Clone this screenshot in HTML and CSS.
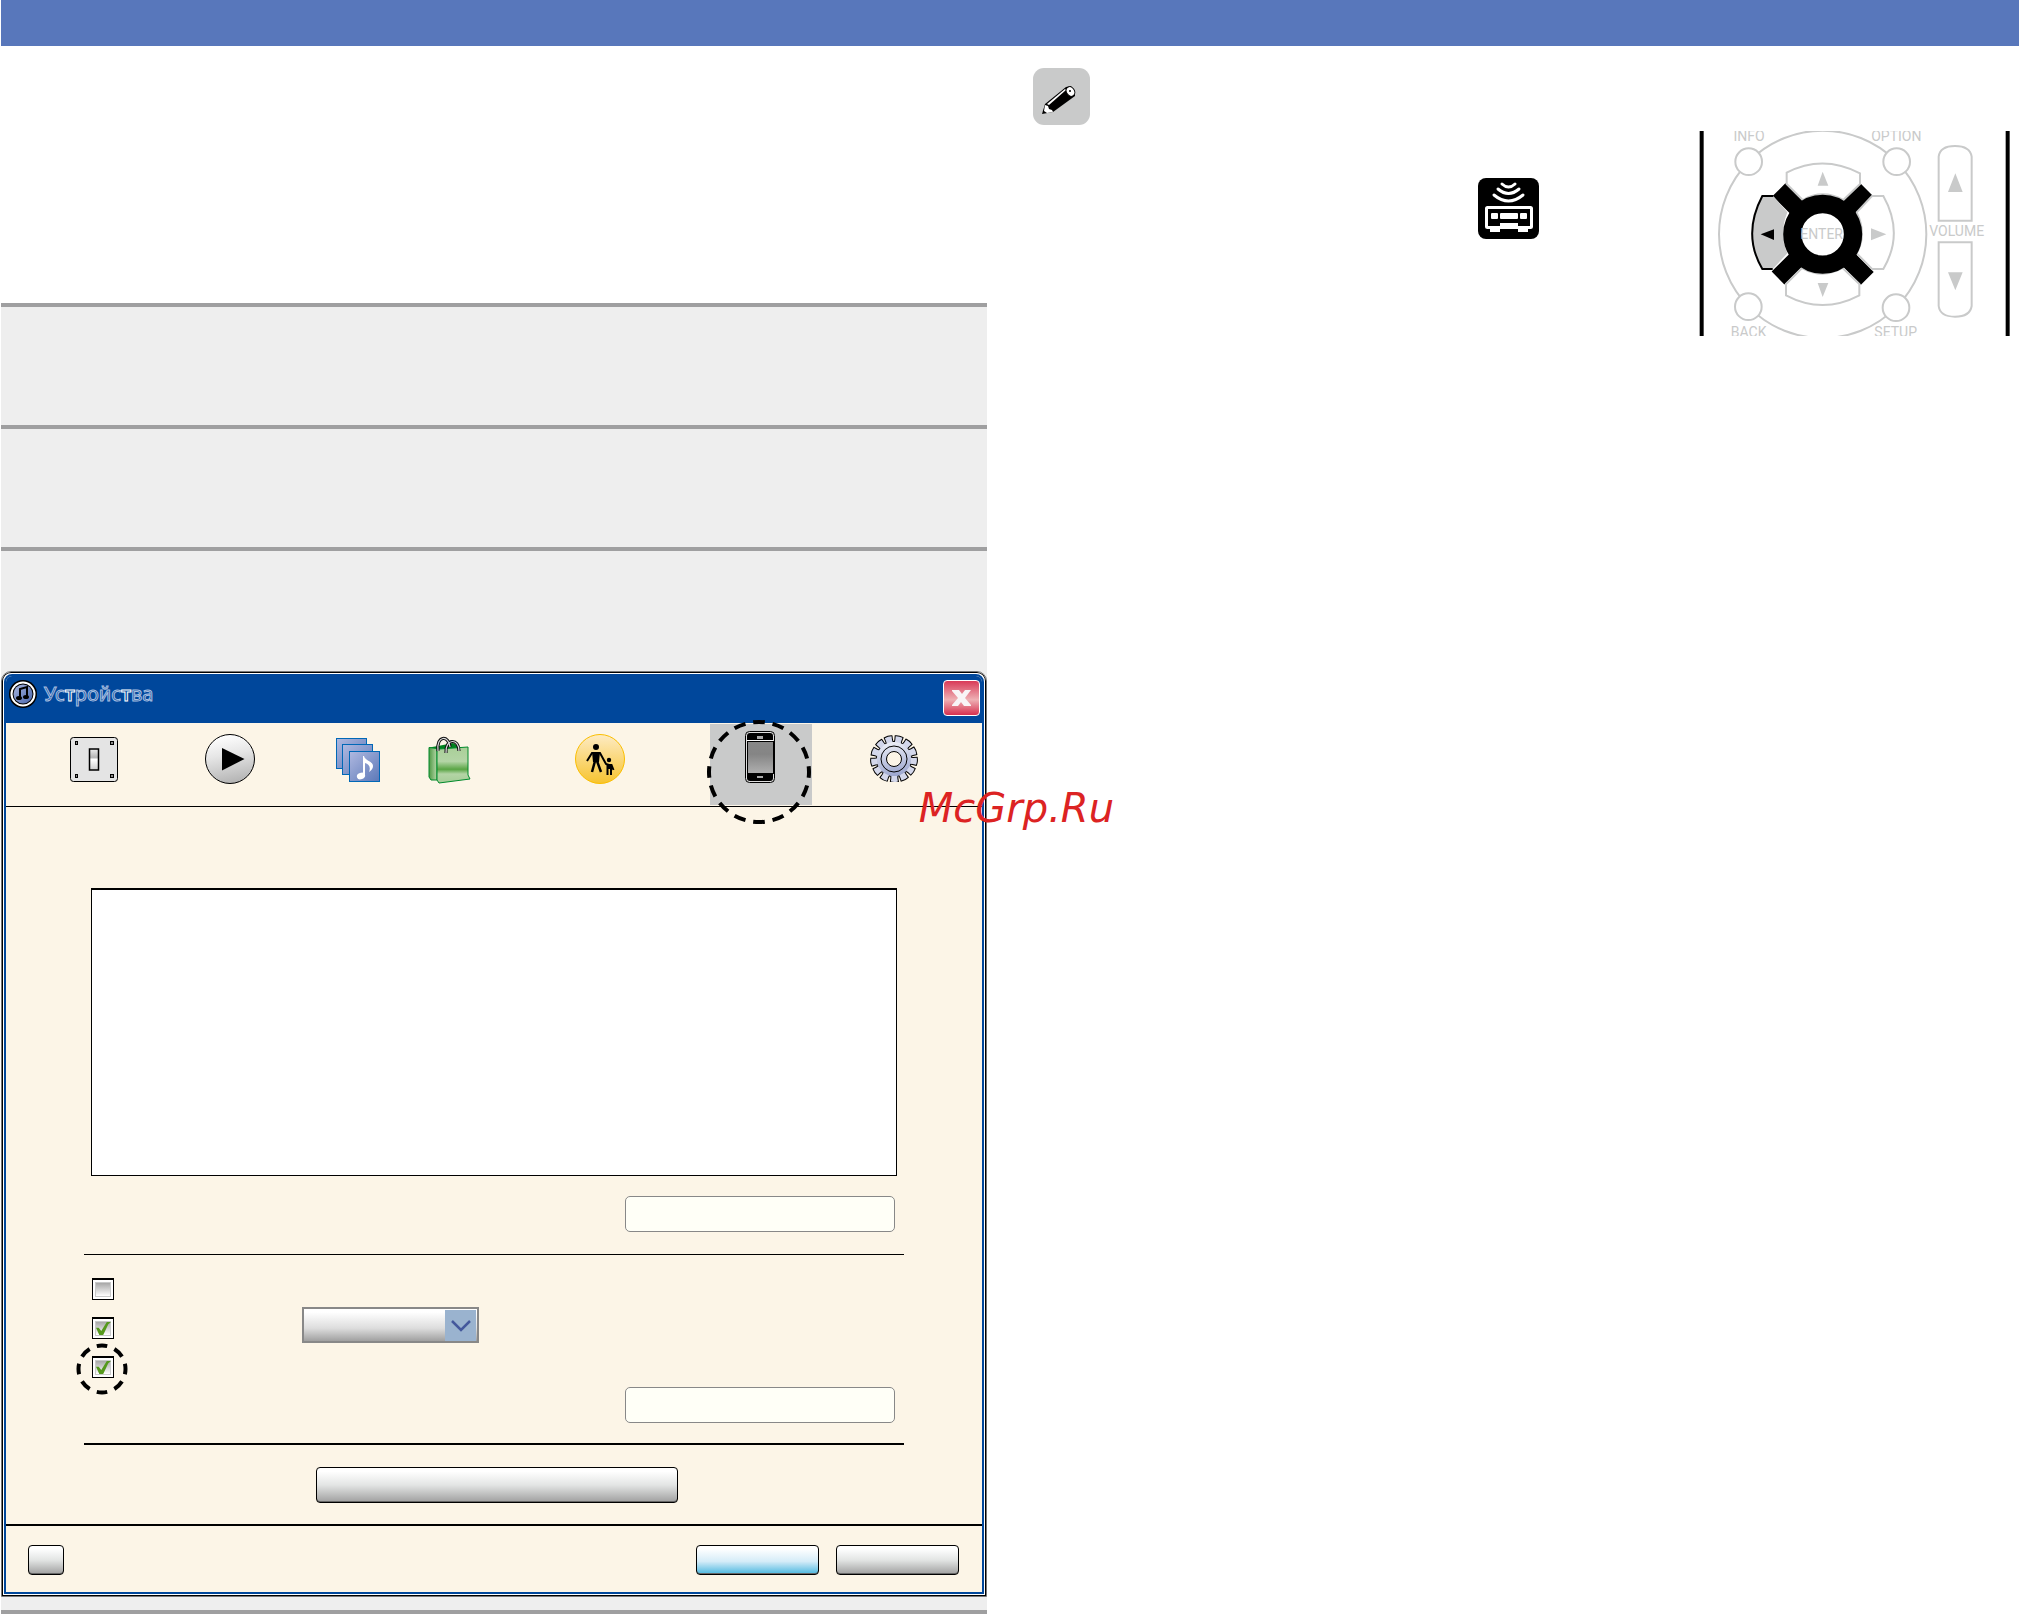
FILE: index.html
```html
<!DOCTYPE html>
<html lang="ru">
<head>
    <meta charset="UTF-8">
    <meta name="viewport" content="width=device-width, initial-scale=1.0">
    <title>Устройства</title>
    <link rel="stylesheet" href="styles.css">
</head>
<body>
    <header class="top-bar"></header>

    <main class="page">
        <section class="steps">
            <div class="step"></div>
            <div class="step"></div>
            <div class="step"></div>

            <div class="dialog">
                <div class="dialog-inner">
                    <div class="title-bar">
                        <svg class="app-icon" width="28" height="28" viewBox="0 0 28 28">
                            <defs>
                                <linearGradient id="noteBg" x1="0" y1="0" x2="1" y2="1">
                                    <stop offset="0" stop-color="#a9b6de"/>
                                    <stop offset="1" stop-color="#4765ac"/>
                                </linearGradient>
                            </defs>
                            <circle cx="14" cy="14" r="14" fill="#000"/>
                            <circle cx="14" cy="14" r="11.500" fill="#000" stroke="#fff" stroke-width="2"/>
                            <circle cx="14" cy="14" r="9.500" fill="url(#noteBg)"/>
                            <path d="M11 18V9l7-2v9" fill="none" stroke="#000" stroke-width="2"/>
                            <ellipse cx="10" cy="18" rx="3" ry="2" fill="#000"/>
                            <ellipse cx="17" cy="17" rx="3" ry="2" fill="#000"/>
                        </svg>
                        <h1 class="title">Ус<b>т</b>ройс<b>т</b>ва</h1>
                        <button class="close-button" aria-label="Закрыть">
                            <svg width="21" height="18" viewBox="0 0 21 18">
                                <path d="M1 1h7l3 4 3-4h6l-6 8 6 7v1h-7l-3-4-3 4H1v-1l6-7-6-7z" fill="#f8f4f6"/>
                            </svg>
                        </button>
                    </div>

                    <nav class="toolbar">
                        <button class="tab" aria-label="Основные">
                            <svg width="48" height="50" viewBox="0 0 48 50">
                                <defs>
                                    <linearGradient id="switchBg" x1="0" y1="0" x2="0" y2="1">
                                        <stop offset="0" stop-color="#eee"/>
                                        <stop offset=".4" stop-color="#b5b5b5"/>
                                        <stop offset=".5" stop-color="#fff"/>
                                        <stop offset="1" stop-color="#ccc"/>
                                    </linearGradient>
                                </defs>
                                <rect x=".5" y="3.500" width="47" height="44" rx="3" fill="#e4e4e4" stroke="#000"/>
                                <g fill="#888" stroke="#000">
                                    <rect x="5.500" y="7.500" width="2" height="3"/>
                                    <rect x="40.500" y="7.500" width="3" height="3"/>
                                    <rect x="5.500" y="40.500" width="2" height="3"/>
                                    <rect x="40.500" y="40.500" width="3" height="3"/>
                                </g>
                                <rect x="19.500" y="15" width="9" height="21" fill="url(#switchBg)" stroke="#000" stroke-width="1.500"/>
                            </svg>
                        </button>
                        <button class="tab" aria-label="Воспроизведение">
                            <svg width="50" height="50" viewBox="0 0 50 50">
                                <defs>
                                    <linearGradient id="playBg" x1=".4" y1="0" x2=".6" y2="1">
                                        <stop offset="0" stop-color="#fff"/>
                                        <stop offset=".4" stop-color="#e6e6e6"/>
                                        <stop offset="1" stop-color="#b2b2b2"/>
                                    </linearGradient>
                                </defs>
                                <circle cx="25" cy="25" r="24.500" fill="url(#playBg)" stroke="#000"/>
                                <path d="M17 14v22.500L39.500 25z" fill="#000"/>
                            </svg>
                        </button>
                        <button class="tab" aria-label="Общий доступ">
                            <svg width="44" height="50" viewBox="0 0 44 50">
                                <defs>
                                    <linearGradient id="albumBg" x1="0" y1="0" x2="1" y2="1">
                                        <stop offset="0" stop-color="#b0b9e0"/>
                                        <stop offset="1" stop-color="#5c78b8"/>
                                    </linearGradient>
                                </defs>
                                <g fill="url(#albumBg)" stroke="#0068b7">
                                    <rect x=".5" y="4.500" width="30" height="30"/>
                                    <rect x="6.500" y="10.500" width="30" height="30"/>
                                    <rect x="13.500" y="17.500" width="30" height="30"/>
                                </g>
                                <ellipse cx="25" cy="42" rx="4.200" ry="3.200" fill="#fff" transform="rotate(-20 25 42)"/>
                                <path d="M27 42V22h1c1 5 9 5 9 10 0 2-1 4-4 6 2-5 0-8-4-9v13z" fill="#fff"/>
                            </svg>
                        </button>
                        <button class="tab tab-store" aria-label="Магазин">
                            <svg width="43" height="50" viewBox="0 0 43 50">
                                <defs>
                                    <linearGradient id="bagFront" x1="0" y1="0" x2="0" y2="1">
                                        <stop offset="0" stop-color="#a9cf98"/>
                                        <stop offset=".4" stop-color="#b4d5a6"/>
                                        <stop offset=".62" stop-color="#5aa545"/>
                                        <stop offset=".75" stop-color="#b3d4a5"/>
                                        <stop offset="1" stop-color="#a5cc96"/>
                                    </linearGradient>
                                    <linearGradient id="bagSide" x1="0" y1="0" x2="1" y2="0">
                                        <stop offset="0" stop-color="#4f9a45"/>
                                        <stop offset="1" stop-color="#b7d7a8"/>
                                    </linearGradient>
                                </defs>
                                <path d="M1 13.500L10 12l15-3 5 3v5H9z" fill="#00821e"/>
                                <path d="M1 13.500l8 1V46H3l-2-3z" fill="url(#bagSide)" stroke="#008a2b"/>
                                <path d="M9 17l2-2 29-2v28l2 4-31 4-2-3z" fill="url(#bagFront)" stroke="#008a2b"/>
                                <g fill="none">
                                    <path d="M10 17C8 1 21 1 22 13M18 19C17 4 31 4 31 17" stroke="#111" stroke-width="3.200"/>
                                    <path d="M10 17C8 1 21 1 22 13M18 19C17 4 31 4 31 17" stroke="#ddd" stroke-width="1.200"/>
                                </g>
                            </svg>
                        </button>
                        <button class="tab" aria-label="Родительский контроль">
                            <svg width="50" height="50" viewBox="0 0 50 50">
                                <defs>
                                    <linearGradient id="parentBg" x1="0" y1="0" x2="0" y2="1">
                                        <stop offset="0" stop-color="#fdebc4"/>
                                        <stop offset="1" stop-color="#f7c430"/>
                                    </linearGradient>
                                </defs>
                                <circle cx="25" cy="25" r="24.500" fill="url(#parentBg)" stroke="#fabe00"/>
                                <circle cx="21" cy="13" r="3" fill="#000"/>
                                <circle cx="34" cy="26" r="2.200" fill="#000"/>
                                <g fill="none" stroke="#000" stroke-width="2">
                                    <path d="M12 27l5-8h8l6 11 3 1"/>
                                    <path d="M20 27l-3 11M22 27l4 11" stroke-width="2.500"/>
                                    <path d="M32.500 41V31h4l2 5M36 32v9"/>
                                </g>
                                <path d="M17 18h8l-1 10h-6zM32 30h5v5h-5z" fill="#000"/>
                            </svg>
                        </button>
                        <button class="tab tab-active" aria-label="Устройства">
                            <svg width="32" height="52" viewBox="0 0 32 52">
                                <defs>
                                    <linearGradient id="phoneScreen" x1="0" y1="0" x2="0" y2="1">
                                        <stop offset="0" stop-color="#888"/>
                                        <stop offset=".4" stop-color="#858585"/>
                                        <stop offset="1" stop-color="#b0b0b0"/>
                                    </linearGradient>
                                </defs>
                                <rect x=".5" y=".5" width="29" height="51" rx="4" fill="#ddd" stroke="#000"/>
                                <rect x="2" y="2" width="26" height="48" rx="3" fill="#000"/>
                                <rect x="2" y="9" width="26" height="33" fill="#fff"/>
                                <rect x="2.500" y="10.500" width="26" height="32" fill="url(#phoneScreen)" stroke="#000"/>
                                <path d="M12 5h6v3h-6zM12 45h6v2h-6z" fill="#aaa"/>
                            </svg>
                            <svg class="highlight-tab" width="106" height="106" viewBox="0 0 106 106">
                                <circle cx="53" cy="53" r="50" pathLength="240" fill="none" stroke="#000" stroke-width="4" stroke-dasharray="9 6" stroke-dashoffset="4.500"/>
                            </svg>
                        </button>
                        <button class="tab" aria-label="Дополнительные">
                            <svg width="48" height="48" viewBox="0 0 48 48">
                                <defs>
                                    <linearGradient id="gearBg" gradientUnits="userSpaceOnUse" x1="20" y1="0" x2="28" y2="48">
                                        <stop offset="0" stop-color="#fff"/>
                                        <stop offset="1" stop-color="#8d99c8"/>
                                    </linearGradient>
                                    <path id="tooth" d="M21 8.500V6L20.500 2.500Q24 1.500 27.500 2.500L27 6v2.500z"/>
                                    <g id="teeth">
                                        <use href="#tooth" transform="rotate(13 24 25)"/>
                                        <use href="#tooth" transform="rotate(41 24 25)"/>
                                        <use href="#tooth" transform="rotate(69 24 25)"/>
                                        <use href="#tooth" transform="rotate(96 24 25)"/>
                                        <use href="#tooth" transform="rotate(124 24 25)"/>
                                        <use href="#tooth" transform="rotate(152 24 25)"/>
                                        <use href="#tooth" transform="rotate(179 24 25)"/>
                                        <use href="#tooth" transform="rotate(207 24 25)"/>
                                        <use href="#tooth" transform="rotate(235 24 25)"/>
                                        <use href="#tooth" transform="rotate(262 24 25)"/>
                                        <use href="#tooth" transform="rotate(290 24 25)"/>
                                        <use href="#tooth" transform="rotate(318 24 25)"/>
                                        <use href="#tooth" transform="rotate(345 24 25)"/>
                                    </g>
                                </defs>
                                <use href="#teeth" fill="#000" stroke="#000" stroke-width="2"/>
                                <circle cx="24" cy="25" r="17.500" fill="url(#gearBg)" stroke="#000"/>
                                <use href="#teeth" fill="#d3d7eb"/>
                                <circle cx="24" cy="25" r="17" fill="url(#gearBg)"/>
                                <circle cx="24" cy="25" r="13" fill="none" stroke="#000"/>
                                <circle cx="24" cy="25" r="7.500" fill="#fcf5e7" stroke="#000"/>
                            </svg>
                        </button>
                    </nav>

                    <div class="panel">
                        <div class="device-list"></div>
                        <button class="light-button" aria-label="Удалить резервную копию"></button>

                        <div class="options">
                            <div class="option">
                                <input type="checkbox" class="check" aria-label="Предупреждать">
                            </div>
                            <div class="option">
                                <input type="checkbox" class="check" aria-label="Предупреждать, если изменится больше" checked>
                                <div class="select-wrap">
                                    <select class="amount-select" aria-label="Количество данных"><option></option></select>
                                    <span class="select-arrow">
                                        <svg width="20" height="12" viewBox="0 0 20 12">
                                            <path d="M1 1l9 9 9-9" fill="none" stroke="#44589c" stroke-width="2.500"/>
                                        </svg>
                                    </span>
                                </div>
                            </div>
                            <div class="option">
                                <input type="checkbox" class="check" aria-label="Управление аудио" checked>
                                <svg class="highlight-check" width="52" height="52" viewBox="0 0 52 52">
                                    <circle cx="26" cy="26" r="23.500" pathLength="96" fill="none" stroke="#000" stroke-width="4" stroke-dasharray="7 5" stroke-dashoffset="3.500"/>
                                </svg>
                            </div>
                        </div>
                        <button class="light-button" aria-label="Удалить все пульты"></button>

                        <div class="reset-row">
                            <button class="grey-button reset-button" aria-label="Сбросить историю синхронизации"></button>
                        </div>
                    </div>

                    <footer class="dialog-footer">
                        <button class="grey-button help-button" aria-label="Справка"></button>
                        <button class="grey-button ok-button" aria-label="OK"></button>
                        <button class="grey-button cancel-button" aria-label="Отмена"></button>
                    </footer>
                </div>
            </div>
            <a class="watermark" href="#">McGrp.Ru</a>
        </section>

        <section class="notes">
            <svg class="pencil-icon" width="57" height="57" viewBox="0 0 57 57">
                <rect width="57" height="57" rx="11" fill="#c9caca"/>
                <path d="M9 46l3-10 21-17 5-1 4 5v5L20 44z" fill="#000"/>
                <path d="M12 37l3 1 1 3 3 1 1 2-6 1-3-2z" fill="#fff"/>
                <path d="M14 36l18-15 1 1-17 15z" fill="#fff"/>
                <ellipse cx="37.500" cy="23.500" rx="4" ry="5" fill="#fff" stroke="#000" transform="rotate(-35 37.500 23.500)"/>
                <circle cx="37" cy="23" r="1" fill="#000"/>
            </svg>

            <div class="figures">
                <svg class="remote-app-icon" width="61" height="61" viewBox="0 0 61 61">
                    <rect width="61" height="61" rx="8" fill="#000"/>
                    <g fill="none" stroke="#fff" stroke-width="3" stroke-linecap="round">
                        <path d="M24 6q6.500 6 13 0"/>
                        <path d="M20 11q10.500 9 21 0"/>
                        <path d="M16 17q14.500 12 29 0"/>
                    </g>
                    <rect x="8.500" y="29.500" width="45" height="20" rx="1" fill="none" stroke="#fff" stroke-width="3"/>
                    <path d="M22 45h18v5H22zM12 50h10v4H12zM40 50h10v4H40z" fill="#fff"/>
                    <rect x="13" y="35" width="7" height="6" rx="1" fill="#fff"/>
                    <rect x="22" y="35" width="18" height="6" rx="1" fill="#fff"/>
                    <rect x="42" y="35" width="7" height="6" rx="1" fill="#fff"/>
                </svg>

                <svg class="remote-figure" width="311" height="205" viewBox="27 33 933 615">
                    <!-- remote body edges -->
                    <path d="M29 33h12v615H29zM947 33h12v615h-12z" fill="#000"/>
                    <g fill="#fff" stroke="#c9caca" stroke-width="6">
                        <circle cx="398" cy="343" r="311"/>
                        <circle cx="176" cy="125" r="40"/>
                        <circle cx="620" cy="125" r="40"/>
                        <circle cx="175" cy="560" r="40"/>
                        <circle cx="618" cy="563" r="40"/>
                    </g>
                    <!-- ring and arms -->
                    <path d="M267 209L532 475M530 209L264 474" stroke="#000" stroke-width="54"/>
                    <g fill="#fff" stroke="#c9caca" stroke-width="6">
                        <path d="M290 192V158Q398 102 510 160V192L460 240Q398 206 338 240Z"/>
                        <path d="M288 492V526Q398 584 508 526V492L458 444Q398 478 336 444Z"/>
                        <path d="M546 228H580Q643 340 580 447H546L500 400Q532 343 500 277Z"/>
                        <path d="M746 302V110Q750 78 795 78Q840 78 845 110V302Z"/>
                        <path d="M746 367V558Q750 590 795 590Q840 590 845 558V367Z"/>
                    </g>
                    <path d="M250 228H217Q156 343 217 447H248L292 400Q266 343 292 277Z" fill="#c9caca"/>
                    <circle cx="398" cy="343" r="91" fill="#fff" stroke="#000" stroke-width="55"/>
                    <path d="M250 228H217Q156 343 217 447H248" fill="none" stroke="#000" stroke-width="6"/>
                    <path d="M212 343L252 328V360Z" fill="#000"/>
                    <g fill="#c9caca">
                        <path d="M398 155L383 197H415ZM383 489H415L398 531ZM543 325V361L589 343Z"/>
                        <path d="M796 160L774 216H818ZM774 457H818L796 511Z"/>
                    </g>
                    <g class="remote-label" text-anchor="middle">
                        <text x="177" y="62">INFO</text>
                        <text x="619" y="62">OPTION</text>
                        <text x="395" y="357">ENTER</text>
                        <text x="800" y="348">VOLUME</text>
                        <text x="176" y="651">BACK</text>
                        <text x="617" y="652">SETUP</text>
                    </g>
                </svg>
            </div>
        </section>
    </main>
</body>
</html>
```
FILE: styles.css
```css
* {
    box-sizing: border-box;
}
body {
    margin: 0;
    background: #fff;
    font-family: "Noto Sans", sans-serif;
}
button {
    padding: 0;
    cursor: pointer;
}
.top-bar {
    height: 46px;
    margin-left: 1px;
    background: #5877bb;
}
.page {
    display: grid;
    grid-template-columns: 1fr 1fr;
    column-gap: 46px;
    padding-left: 1px;
}

/* left column */
.steps {
    position: relative;
    margin-top: 257px;
    padding-bottom: 13px;
    background: #eee;
    border-bottom: 4px solid #9f9fa0;
}
.step {
    height: 122px;
    border-top: 4px solid #9f9fa0;
}
.dialog {
    margin-top: 2px;
    padding: 2px;
    background: #fff;
    border: 1px solid #777;
    border-radius: 10px 10px 0 0;
    box-shadow: inset 0 0 0 1px #000;
}
.dialog-inner {
    background: #fcf5e7;
    border: 2px solid #00479b;
    border-radius: 8px 8px 0 0;
}
.title-bar {
    display: flex;
    align-items: flex-start;
    height: 47px;
    padding: 4px 2px 0 3px;
    background: #00479b;
    border-radius: 6px 6px 0 0;
}
.app-icon {
    margin-right: 7px;
}
.title {
    flex: 1;
    margin: 0;
    color: #00479b;
    font-size: 20px;
    font-weight: 400;
    line-height: 28px;
    -webkit-text-stroke: 1px #a9bfe0;
}
.title b {
    font-weight: 600;
    -webkit-text-stroke: 1px #fff;
}
.close-button {
    display: flex;
    align-items: center;
    justify-content: center;
    width: 37px;
    height: 36px;
    background: linear-gradient(#d93a58, #eeb0b4 55%, #d6304f);
    border: 1px solid #fff;
    border-radius: 4px;
}

/* toolbar */
.toolbar {
    display: grid;
    grid-template-columns: 136fr 136fr 120fr 72fr 220fr 102fr 164fr;
    height: 84px;
    padding: 1px 6px 1px 20px;
    border-bottom: 1px solid #000;
}
.tab {
    display: flex;
    justify-content: center;
    align-items: flex-start;
    padding-top: 10px;
    background: none;
    border: none;
}
.tab-store {
    margin-right: 10px;
}
.tab-active {
    position: relative;
    padding-top: 7px;
    background: #c9caca;
}
.highlight-tab {
    position: absolute;
    top: -5px;
    left: -4px;
}

/* panel */
.panel {
    padding: 81px 78px 21px;
}
.device-list {
    height: 288px;
    margin: 0 7px 20px;
    background: #fff;
    border: 1px solid #000;
    border-top-width: 2px;
}
.light-button {
    display: block;
    width: 270px;
    height: 36px;
    margin: 0 9px 0 auto;
    background: #fffff7;
    border: 1px solid #888;
    border-radius: 5px;
}
.options {
    display: flex;
    flex-direction: column;
    gap: 17px;
    margin-top: 22px;
    padding: 23px 8px 9px;
    border-top: 1px solid #000;
}
.option {
    position: relative;
    display: flex;
    align-items: center;
    height: 22px;
}
.check {
    appearance: none;
    width: 22px;
    height: 22px;
    margin: 0;
    padding: 3px;
    background: linear-gradient(#a8a8a8, #fff) content-box, #fff;
    border: 1px solid #000;
    border-top-width: 2px;
    box-shadow: inset 0 0 0 2px #fff, inset 0 0 0 3px #c9caca;
}
.check:checked::after {
    content: "";
    display: block;
    width: 15px;
    height: 13px;
    background: #55991d;
    clip-path: polygon(0 45%, 18% 45%, 35% 70%, 72% 0, 100% 0, 82% 18%, 48% 100%, 22% 100%);
}
.select-wrap {
    position: relative;
    width: 177px;
    height: 36px;
    margin: 0 0 6px 188px;
}
.amount-select {
    appearance: none;
    width: 100%;
    height: 100%;
    background: linear-gradient(#fff 10%, #ddd 60%, #a0a0a0);
    border: 2px solid #888;
    border-radius: 0;
}
.select-arrow {
    position: absolute;
    top: 3px;
    right: 3px;
    display: flex;
    align-items: center;
    justify-content: center;
    width: 31px;
    height: 31px;
    background: #9ab3cf;
    pointer-events: none;
}
.highlight-check {
    position: absolute;
    top: -13px;
    left: -16px;
    pointer-events: none;
}
.reset-row {
    margin-top: 20px;
    padding: 22px 0 0 232px;
    border-top: 2px solid #000;
}
.grey-button {
    display: block;
    height: 30px;
    background: linear-gradient(#fff 10%, #e3e5e4 50%, #a0a0a0);
    border: 1px solid #000;
    border-radius: 4px;
    box-shadow: inset 0 -1px 0 #666;
}
.reset-button {
    width: 362px;
    height: 36px;
}
.dialog-footer {
    display: flex;
    height: 68px;
    padding: 19px 23px 0 22px;
    border-top: 2px solid #000;
}
.help-button {
    width: 36px;
    margin-right: auto;
}
.ok-button {
    width: 123px;
    margin-right: 17px;
    background: linear-gradient(#fff 10%, #d5ecf8 55%, #4cb8e0);
}
.cancel-button {
    width: 123px;
}
.watermark {
    position: absolute;
    top: 481px;
    right: -127px;
    color: #dc2323;
    font: italic 40px/48px "DejaVu Sans", sans-serif;
    text-decoration: none;
}

/* right column */
.notes {
    padding: 22px 9px 0 0;
}
.pencil-icon {
    display: block;
    margin-bottom: 6px;
}
.figures {
    display: flex;
    justify-content: flex-end;
    gap: 160px;
}
.remote-app-icon {
    margin-top: 47px;
}
.remote-label {
    fill: #c9caca;
    font-family: "Liberation Sans Narrow", Roboto, sans-serif;
    font-size: 42px;
}
```
